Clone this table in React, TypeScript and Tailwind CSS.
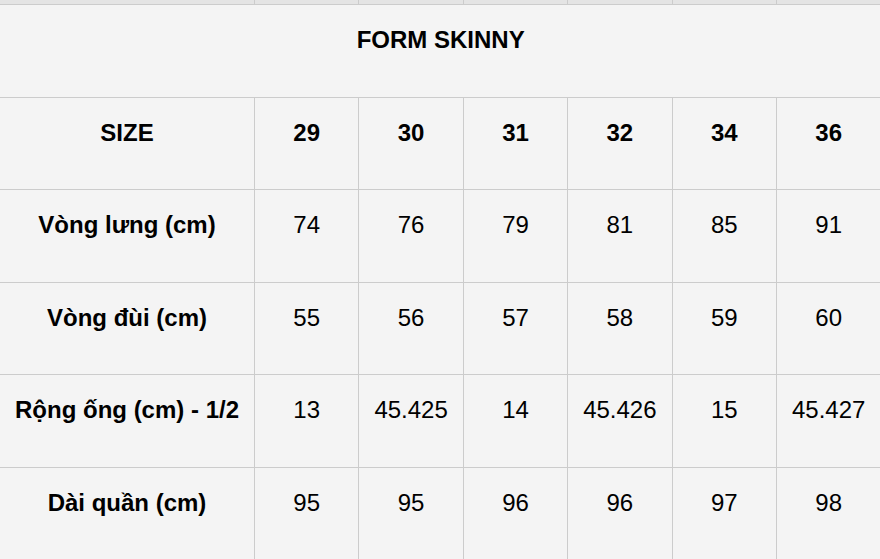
const sizes = ['29', '30', '31', '32', '34', '36']

const rows = [
  { label: 'Vòng lưng (cm)', values: ['74', '76', '79', '81', '85', '91'], h: 'h-[93px]' },
  { label: 'Vòng đùi (cm)', values: ['55', '56', '57', '58', '59', '60'], h: 'h-[92px]' },
  { label: 'Rộng ống (cm) - 1/2', values: ['13', '45.425', '14', '45.426', '15', '45.427'], h: 'h-[93px]' },
  { label: 'Dài quần (cm)', values: ['95', '95', '96', '96', '97', '98'], h: 'h-[92px]' },
]

const cell = 'border-r border-b border-[#cccccc] pt-[21px] text-center text-[24px] leading-[28px] text-black'

export default function App() {
  return (
    <div
      className="h-[559px] w-[880px] overflow-hidden bg-[#f4f4f4]"
      style={{ fontFamily: '"Liberation Sans", Arial, sans-serif' }}
    >
      <div className="grid w-[1000px] grid-cols-[255px_repeat(6,104.4px)]">
        {/* tail of the previous row */}
        {Array.from({ length: 7 }).map((_, i) => (
          <div key={i} className="h-[5px] border-r border-b border-[#cccccc] bg-[#e4e4e4]" />
        ))}

        <div className="col-span-7 h-[93px] border-b border-[#cccccc] pt-[21px] text-center text-[24px] leading-[28px] font-bold text-black">
          FORM SKINNY
        </div>

        <div className={`${cell} h-[92px] font-bold`}>SIZE</div>
        {sizes.map((s) => (
          <div key={s} className={`${cell} h-[92px] font-bold`}>
            {s}
          </div>
        ))}

        {rows.map((row) => (
          <div key={row.label} className="contents">
            <div className={`${cell} ${row.h} font-bold`}>{row.label}</div>
            {row.values.map((v, i) => (
              <div key={i} className={`${cell} ${row.h}`}>
                {v}
              </div>
            ))}
          </div>
        ))}
      </div>
    </div>
  )
}
